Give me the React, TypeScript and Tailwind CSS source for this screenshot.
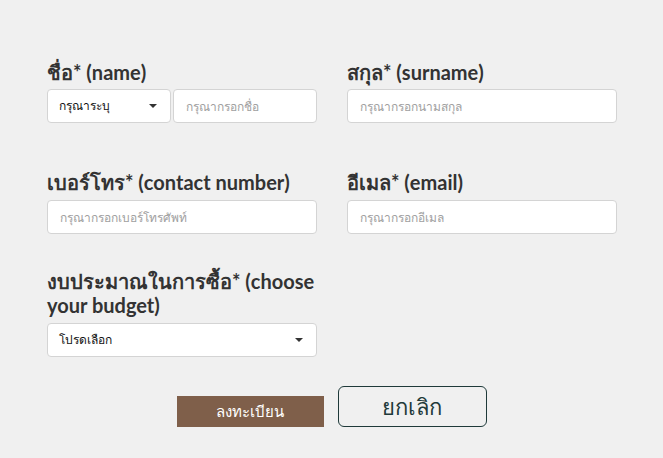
const Caret = () => (
  <svg width="8" height="4" viewBox="0 0 8 4" className="shrink-0">
    <path d="M0 0h8L4 4z" fill="#333" />
  </svg>
);

const Label = ({ children }: { children: React.ReactNode }) => (
  <label className="block text-[20px] leading-[24px] font-bold text-[#333]">{children}</label>
);

const TextInput = ({ placeholder, className = "" }: { placeholder: string; className?: string }) => (
  <input
    placeholder={placeholder}
    className={`h-[34px] rounded-[4px] border border-[#d4d4d4] bg-white px-3 text-[12px] text-[#333] placeholder:text-[#a0a0a0] outline-none ${className}`}
  />
);

const Select = ({ value, className = "" }: { value: string; className?: string }) => (
  <div
    className={`flex h-[34px] items-center justify-between rounded-[4px] border border-[#d4d4d4] bg-white pl-[11px] pr-[13px] text-[12px] text-[#111] ${className}`}
  >
    <span>{value}</span>
    <Caret />
  </div>
);

export default function App() {
  return (
    <div
      className="min-h-screen w-full bg-[#f0f0f0]"
      style={{ fontFamily: "Lato, 'Noto Sans', 'DejaVu Sans', sans-serif" }}
    >
      <div className="grid grid-cols-[270px_270px] gap-x-[30px] pl-[47px] pt-[60px]">
        <div>
          <Label>ชื่อ* (name)</Label>
          <div className="mt-[5px] flex gap-[2px]">
            <Select value="กรุณาระบุ" className="w-[124px]" />
            <TextInput placeholder="กรุณากรอกชื่อ" className="w-[144px]" />
          </div>
        </div>
        <div>
          <Label>สกุล* (surname)</Label>
          <TextInput placeholder="กรุณากรอกนามสกุล" className="mt-[5px] w-full" />
        </div>

        <div className="mt-[47px]">
          <Label>เบอร์โทร* (contact number)</Label>
          <TextInput placeholder="กรุณากรอกเบอร์โทรศัพท์" className="mt-[6px] w-full" />
        </div>
        <div className="mt-[47px]">
          <Label>อีเมล* (email)</Label>
          <TextInput placeholder="กรุณากรอกอีเมล" className="mt-[6px] w-full" />
        </div>

        <div className="mt-[35px]">
          <Label>งบประมาณในการซื้อ* (choose your budget)</Label>
          <Select value="โปรดเลือก" className="mt-[6px] w-full" />
        </div>
        <div />
      </div>

      <div className="mt-[29px] flex items-end justify-center gap-[14px]">
        <button className="h-[31px] w-[147px] bg-[#7f5f4a] text-[15px] font-normal text-white">ลงทะเบียน</button>
        <button className="h-[41px] w-[149px] rounded-[6px] border border-[#1f3a3a] text-[22px] text-[#1f3a3a]">
          ยกเลิก
        </button>
      </div>
    </div>
  );
}
